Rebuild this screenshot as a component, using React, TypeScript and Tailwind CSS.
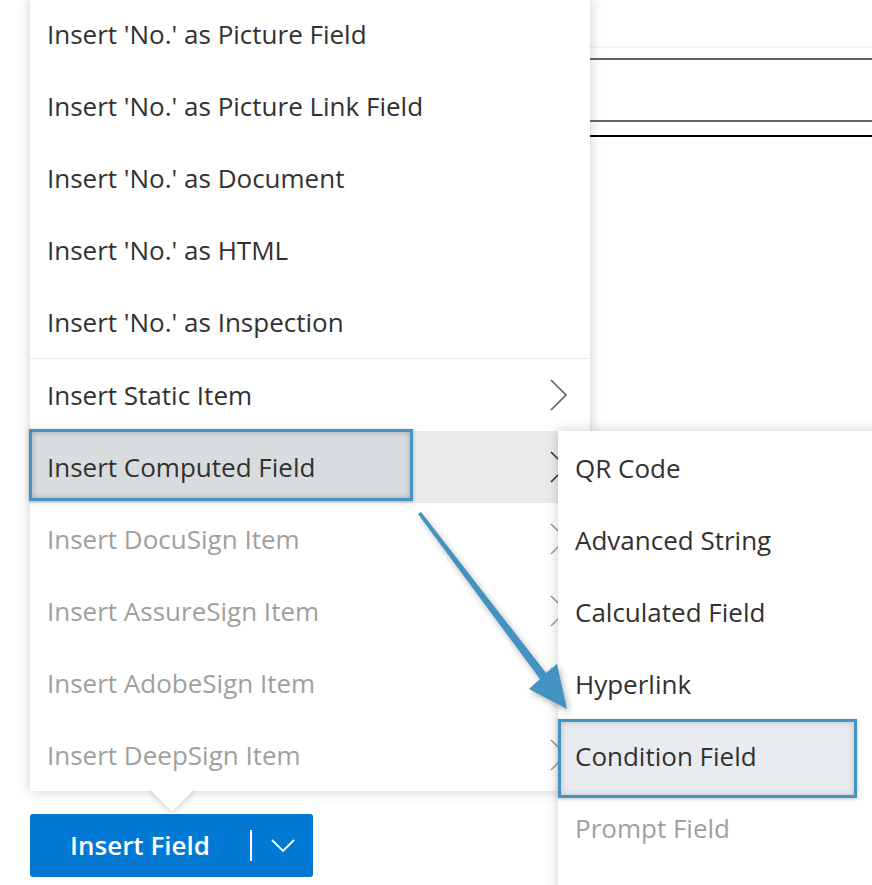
import React from 'react';

// Field insertion flyout: main menu, computed-field submenu, split button below.

type Item = { label: string; disabled?: boolean; submenu?: boolean; active?: boolean };

const fieldItems: Item[] = [
    { label: "Insert 'No.' as Picture Field" },
    { label: "Insert 'No.' as Picture Link Field" },
    { label: "Insert 'No.' as Document" },
    { label: "Insert 'No.' as HTML" },
    { label: "Insert 'No.' as Inspection" },
];

const groupItems: Item[] = [
    { label: 'Insert Static Item', submenu: true },
    { label: 'Insert Computed Field', submenu: true, active: true },
    { label: 'Insert DocuSign Item', submenu: true, disabled: true },
    { label: 'Insert AssureSign Item', submenu: true, disabled: true },
    { label: 'Insert AdobeSign Item', submenu: true, disabled: true },
    { label: 'Insert DeepSign Item', submenu: true, disabled: true },
];

const computedItems: Item[] = [
    { label: 'QR Code' },
    { label: 'Advanced String' },
    { label: 'Calculated Field' },
    { label: 'Hyperlink' },
    { label: 'Condition Field', active: true },
    { label: 'Prompt Field', disabled: true },
];

function ChevronRight({ color }: { color: string }) {
    return (
        <svg width="18" height="32" viewBox="0 0 18 32" className="shrink-0">
            <path d="M1 1 L16 16 L1 31" fill="none" stroke={color} strokeWidth="1.6" />
        </svg>
    );
}

function MenuRow({ item }: { item: Item }) {
    const text = item.disabled ? 'text-[#a19f9d]' : 'text-[#323130]';
    return (
        <div
            className={`relative h-[72px] flex items-center justify-between pl-[17px] pr-[22px] ${
                item.active ? 'bg-[#edebe9]' : ''
            }`}
        >
            {item.active && (
                <div className="absolute left-[-1px] top-[-2px] w-[384px] h-[72px] border-[3px] border-[#4593c0] bg-[#d9dcdf] shadow-[inset_0_0_6px_rgba(0,0,0,0.25),0_1px_4px_rgba(0,0,0,0.25)]" />
            )}
            <span className={`relative ${text}`}>{item.label}</span>
            {item.submenu && (
                <ChevronRight color={item.active ? '#323130' : item.disabled ? '#a19f9d' : '#605e5c'} />
            )}
        </div>
    );
}

function SubRow({ item }: { item: Item }) {
    const text = item.disabled ? 'text-[#a19f9d]' : 'text-[#323130]';
    return (
        <div className="relative h-[72px] flex items-center pl-[17px]">
            {item.active && (
                <div className="absolute left-0 top-[-1px] w-[299px] h-[79px] border-[3px] border-[#4593c0] bg-[#e8ecf0] shadow-[inset_0_0_6px_rgba(0,0,0,0.2),0_1px_4px_rgba(0,0,0,0.25)]" />
            )}
            <span className={`relative ${text}`}>{item.label}</span>
        </div>
    );
}

export default function App() {
    return (
        <div
            className="relative w-[872px] h-[885px] overflow-hidden bg-white text-[26px]"
            style={{ fontFamily: '"Open Sans", "Noto Sans", sans-serif' }}
        >
            {/* Document behind the flyout */}
            <div className="flex flex-col ml-[590px] pt-[46px]">
                <div className="h-[2px] bg-[#f3f2f1]" />
                <div className="h-[2px] bg-[#666666] mt-[10px]" />
                <div className="h-[2px] bg-[#666666] mt-[60px]" />
                <div className="h-[2px] bg-black mt-[13px]" />
            </div>

            {/* Split button */}
            <div className="absolute left-[30px] top-[814px] w-[283px] h-[63px] rounded-[3px] bg-[#0078d4] flex items-center text-white">
                <span className="w-[220px] text-center font-semibold text-[26px]">Insert Field</span>
                <div className="w-[2px] h-[31px] bg-white" />
                <div className="flex-1 flex items-center justify-center">
                    <svg width="24" height="14" viewBox="0 0 24 14">
                        <path d="M1 1 L12 12 L23 1" fill="none" stroke="white" strokeWidth="1.8" />
                    </svg>
                </div>
            </div>

            {/* Main menu */}
            <div className="absolute left-[30px] top-[-2px] w-[560px] bg-white shadow-[0_0_12px_rgba(0,0,0,0.2)]">
                {fieldItems.map((it) => (
                    <MenuRow key={it.label} item={it} />
                ))}
                <div className="h-px bg-[#edebe9]" />
                {groupItems.map((it) => (
                    <MenuRow key={it.label} item={it} />
                ))}
                {/* beak */}
                <div className="absolute left-[119px] bottom-[-22px] w-[46px] h-[23px] overflow-hidden">
                    <div className="w-[32px] h-[32px] bg-white rotate-45 mx-auto mt-[-17px] shadow-[2px_2px_6px_rgba(0,0,0,0.15)]" />
                </div>
            </div>

            {/* Computed field submenu */}
            <div className="absolute left-[558px] top-[431px] w-[330px] h-[470px] pt-px bg-white shadow-[0_0_12px_rgba(0,0,0,0.2)]">
                {computedItems.map((it) => (
                    <SubRow key={it.label} item={it} />
                ))}
            </div>

            {/* Callout arrow */}
            <svg
                className="absolute left-0 top-0 pointer-events-none"
                width="872"
                height="885"
                style={{ filter: 'drop-shadow(2px 3px 3px rgba(0,0,0,0.3))' }}
            >
                <polygon
                    points="418,514 540,679 529,689 567,709 557,664 546,673 421,512"
                    fill="#4293c1"
                />
            </svg>
        </div>
    );
}
